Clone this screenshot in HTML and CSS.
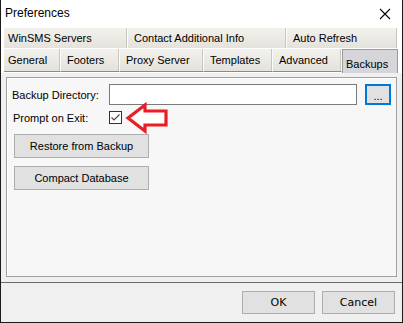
FILE: index.html
```html
<!DOCTYPE html>
<html lang="en">
<head>
    <meta charset="UTF-8">
    <title>Preferences</title>
    <link rel="stylesheet" href="styles.css">
</head>
<body>

    <div class="window">
        <div class="titlebar">
            <span class="title">Preferences</span>
            <svg class="close" width="12" height="12" viewBox="0 0 12 12">
                <path d="M1 1 L11 11 M11 1 L1 11" stroke="#000" stroke-width="1.1" fill="none"/>
            </svg>
        </div>

        <div class="tabstrip">
            <div class="tab-row top-row">
                <div class="tab" style="width:124px">WinSMS Servers</div>
                <div class="tab" style="width:159px">Contact Additional Info</div>
                <div class="tab" style="width:111px">Auto Refresh</div>
            </div>
            <div class="tab-row bottom-row">
                <div class="tab" style="width:57px">General</div>
                <div class="tab" style="width:59px">Footers</div>
                <div class="tab" style="width:84px">Proxy Server</div>
                <div class="tab" style="width:69px">Templates</div>
                <div class="tab" style="width:69px">Advanced</div>
                <div class="tab selected" style="width:56px">Backups</div>
            </div>
        </div>

        <div class="panel">
            <div class="form-row">
                <label class="field-label" for="dir">Backup Directory:</label>
                <input class="text-input" type="text" id="dir">
                <button class="browse-btn" type="button">...</button>
            </div>
            <div class="form-row check-row">
                <span class="field-label prompt">Prompt on Exit:</span>
                <span class="checkbox">
                    <svg width="11" height="11" viewBox="0 0 11 11">
                        <path d="M1.5 5.5 L4 8 L9.5 2.5" stroke="#4a4a4a" stroke-width="1.2" fill="none"/>
                    </svg>
                </span>
                <svg class="arrow" width="44" height="32" viewBox="0 0 44 32">
                    <path d="M3 16 L20 3 L20 9 L41 9 L41 23 L20 23 L20 29 Z" fill="#fff" stroke="#ec1c24" stroke-width="3.2" stroke-linejoin="miter"/>
                </svg>
            </div>
            <button class="btn first" type="button">Restore from Backup</button>
            <button class="btn" type="button">Compact Database</button>
        </div>

        <div class="footer">
            <button class="btn dlg" type="button">OK</button>
            <button class="btn dlg" type="button">Cancel</button>
        </div>
    </div>

</body>
</html>
```

FILE: styles.css
```css
body {
    margin: 0;
    font-family: "Liberation Sans", Arial, sans-serif;
    font-size: 11px;
    color: #000;
    background: #fff;
}
.window {
    width: 403px;
    height: 323px;
    box-sizing: border-box;
    border: 1px solid #1b1b1b;
    border-top: none;
    background: #f0f0f0;
    display: flex;
    flex-direction: column;
}
.titlebar {
    height: 26px;
    background: #fff;
    display: flex;
    align-items: center;
    justify-content: space-between;
    padding: 0 11px 0 4px;
}
.title {
    font-size: 12px;
}
.close {
    margin-top: 1px;
}
.tabstrip {
    padding: 1px 3px 0 3px;
    background: #fff;
}
.tab-row {
    display: flex;
}
.tab {
    box-sizing: border-box;
    padding-left: 6px;
    display: flex;
    align-items: center;
    background: linear-gradient(#f2f1ed, #e4e2db);
    border-right: 1px solid #fbfbfb;
    box-shadow: inset -1px 0 #c9c6be;
    white-space: nowrap;
}
.top-row .tab {
    height: 21px;
    border-top: 1px solid #fff;
}
.top-row .tab:first-child {
    padding-left: 4px;
}
.bottom-row {
    margin-top: 1px;
}
.bottom-row .tab {
    height: 23px;
    border-bottom: 1px solid #8c8a84;
}
.bottom-row .tab:first-child {
    padding-left: 4px;
}
.tab.selected {
    background: #d6d6da;
    border: 1px solid #9a9a9a;
    border-bottom: none;
    box-shadow: none;
    padding-left: 3px;
    padding-top: 4px;
    height: 24px;
}
.panel {
    margin: 4px 5px 0 5px;
    height: 200px;
    box-sizing: border-box;
    border: 1px solid #a0a0a0;
    box-shadow: inset 1px 1px #fff;
    background: #f7f7f7;
    padding: 6px 5px 0 5px;
}
.form-row {
    display: flex;
    align-items: center;
    height: 21px;
}
.field-label {
    width: 97px;
    flex-shrink: 0;
}
.prompt {
    padding-left: 1px;
    width: 96px;
}
.text-input {
    width: 249px;
    height: 21px;
    box-sizing: border-box;
    border: 1px solid #7a7a7a;
    background: #fff;
    margin: 0;
    padding: 0;
}
.browse-btn {
    width: 26px;
    height: 21px;
    margin-left: 8px;
    box-sizing: border-box;
    border: 2px solid #0078d7;
    background: #e1e1e1;
    font-family: "Liberation Sans", Arial, sans-serif;
    font-size: 11px;
    padding: 3px 0 0 0;
    line-height: 1;
}
.check-row {
    position: relative;
    height: 13px;
    margin-top: 6px;
}
.checkbox {
    width: 13px;
    height: 13px;
    box-sizing: border-box;
    border: 1px solid #333;
    background: #fff;
    display: flex;
    align-items: center;
    justify-content: center;
}
.arrow {
    position: absolute;
    left: 113px;
    top: -9px;
}
.btn {
    display: block;
    width: 135px;
    height: 24px;
    box-sizing: border-box;
    border: 1px solid #adadad;
    background: #e1e1e1;
    font-family: "Liberation Sans", Arial, sans-serif;
    font-size: 11px;
    color: #000;
    margin: 8px 0 0 2px;
    padding: 0;
}
.btn.first {
    margin-top: 10px;
}
.footer {
    margin-top: 5px;
    border-top: 1px solid #696969;
    flex: 1;
    display: flex;
    justify-content: flex-end;
    gap: 7px;
    padding: 8px 7px 0 0;
}
.btn.dlg {
    width: 73px;
    height: 23px;
    margin: 0;
    font-family: "DejaVu Sans", sans-serif;
    font-size: 11px;
}
```
